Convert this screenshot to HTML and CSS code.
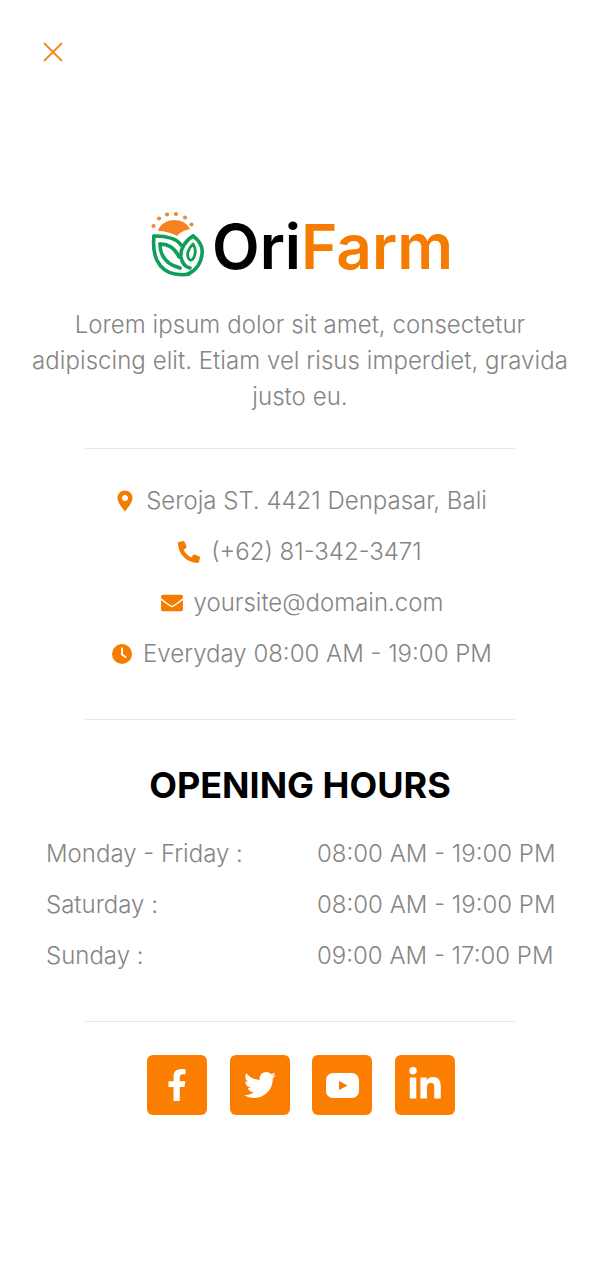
FILE: index.html
```html
<!DOCTYPE html>
<html>

<head>
    <title>OriFarm</title>
    <link rel="stylesheet" href="styles.css">
</head>

<body>
    <div class="menu">
        <button class="close-button" aria-label="Close">
            <svg viewBox="0 0 20 20" width="20" height="20"><path d="M1 1L19 19M19 1L1 19" stroke="#f08a1c" stroke-width="1.8" fill="none"/></svg>
        </button>

        <div class="about">
            <div class="logo">
                <svg class="logo-mark" viewBox="0 0 54 66" width="54" height="66">
                    <!-- sun and rays -->
                    <path d="M7 20C9 13 16 9 23 9C30 9 36 12 39 18C34 19 29 21 26 25C21 22 14 20 7 20Z" fill="#f58220"/>
                    <g fill="#ef8a3c">
                        <circle cx="2.5" cy="15" r="2.1"/>
                        <circle cx="8" cy="7.5" r="2.1"/>
                        <circle cx="16" cy="3.5" r="2.1"/>
                        <circle cx="25" cy="3" r="2.1"/>
                        <circle cx="34" cy="6.5" r="2.1"/>
                        <circle cx="40.5" cy="13.5" r="2.1"/>
                    </g>
                    <!-- leaves -->
                    <g fill="none" stroke="#0f9d58" stroke-width="3.6" stroke-linecap="round" stroke-linejoin="round">
                        <path d="M3 25C1 42 6 60 24 63C30 64 34 64 38 63"/>
                        <path d="M3 25C15 25 26 28 30 34"/>
                        <path d="M42 25C34 30 29 38 30 46C31 52 34 56 39 57"/>
                        <path d="M42 25C49 30 52 36 51 43C50 53 44 60 37 63"/>
                        <path d="M9 33C9 44 14 53 29 57"/>
                        <path d="M9 33C17 33 24 37 28 46"/>
                        <path d="M42 33C37 38 35 44 38 48C40 51 43 48 44 43C45 39 44 36 42 33Z" stroke-width="2.8"/>
                    </g>
                </svg>
                <span class="logo-text">Ori<span class="logo-accent">Farm</span></span>
            </div>
            <p class="intro">Lorem ipsum dolor sit amet, consectetur adipiscing elit. Etiam vel risus imperdiet, gravida justo eu.</p>
        </div>

        <hr class="divider">

        <ul class="contact-list">
            <li class="contact-item">
                <svg class="contact-icon marker-icon" viewBox="0 0 16 22" width="16" height="22"><path fill-rule="evenodd" d="M8 0.5C3.8 0.5 0.5 3.8 0.5 8C0.5 12 5 18 8 21.5C11 18 15.5 12 15.5 8C15.5 3.8 12.2 0.5 8 0.5ZM8 11C6.3 11 5 9.7 5 8C5 6.3 6.3 5 8 5C9.7 5 11 6.3 11 8C11 9.7 9.7 11 8 11Z" fill="#f57c00"/></svg>
                Seroja ST. 4421 Denpasar, Bali
            </li>
            <li class="contact-item">
                <svg class="contact-icon phone-icon" viewBox="0 0 512 512" width="22" height="22"><path d="M497.39 361.8l-112-48a24 24 0 0 0-28 6.9l-49.6 60.6A370.66 370.66 0 0 1 130.6 204.11l60.6-49.6a23.94 23.94 0 0 0 6.9-28l-48-112A24.16 24.16 0 0 0 122.6.61l-104 24A24 24 0 0 0 0 48c0 256.5 207.9 464 464 464a24 24 0 0 0 23.4-18.6l24-104a24.29 24.29 0 0 0-14.01-27.6z" fill="#f57c00"/></svg>
                (+62) 81-342-3471
            </li>
            <li class="contact-item">
                <svg class="contact-icon" viewBox="0 0 512 512" width="22" height="22"><path d="M502.3 190.8c3.9-3.1 9.7-.2 9.7 4.7V400c0 26.5-21.5 48-48 48H48c-26.5 0-48-21.5-48-48V195.6c0-5 5.7-7.8 9.7-4.7 22.4 17.4 52.1 39.5 154.1 113.6 21.1 15.4 56.7 47.8 92.2 47.6 35.7.3 72-32.8 92.3-47.6 102-74.1 131.6-96.3 154-113.7zM256 320c23.2.4 56.6-29.2 73.4-41.4 132.7-96.3 142.8-104.7 173.4-128.7 5.8-4.5 9.2-11.5 9.2-18.9v-19c0-26.5-21.5-48-48-48H48C21.5 64 0 85.5 0 112v19c0 7.4 3.4 14.3 9.2 18.9 30.6 23.9 40.7 32.4 173.4 128.7 16.8 12.2 50.2 41.8 73.4 41.4z" fill="#f57c00"/></svg>
                yoursite@domain.com
            </li>
            <li class="contact-item">
                <svg class="contact-icon" viewBox="0 0 20 20" width="20" height="20"><circle cx="10" cy="10" r="10" fill="#f57c00"/><path d="M10 4.5V10.5L13.5 13" stroke="#fff" stroke-width="2" fill="none" stroke-linecap="round" stroke-linejoin="round"/></svg>
                Everyday 08:00 AM - 19:00 PM
            </li>
        </ul>

        <hr class="divider">

        <h2 class="hours-title">OPENING HOURS</h2>
        <div class="hours-table">
            <span>Monday - Friday :</span><span>08:00 AM - 19:00 PM</span>
            <span>Saturday :</span><span>08:00 AM - 19:00 PM</span>
            <span>Sunday :</span><span>09:00 AM - 17:00 PM</span>
        </div>

        <hr class="divider">

        <div class="social-list">
            <a class="social-button" href="#" aria-label="Facebook">
                <svg viewBox="0 0 320 512" width="22" height="32"><path d="M279.14 288l14.22-92.66h-88.91v-60.13c0-25.35 12.42-50.06 52.24-50.06h40.42V6.26S260.43 0 225.36 0c-73.22 0-121.08 44.38-121.08 124.72v70.62H22.89V288h81.39v224h100.17V288z" fill="#fff"/></svg>
            </a>
            <a class="social-button" href="#" aria-label="Twitter">
                <svg viewBox="0 0 512 512" width="32" height="32"><path d="M459.37 151.716c.325 4.548.325 9.097.325 13.645 0 138.72-105.583 298.558-298.558 298.558-59.452 0-114.68-17.219-161.137-47.106 8.447.974 16.568 1.299 25.34 1.299 49.055 0 94.213-16.568 130.274-44.832-46.132-.975-84.792-31.188-98.112-72.772 6.498.974 12.995 1.624 19.818 1.624 9.421 0 18.843-1.3 27.614-3.573-48.081-9.747-84.143-51.98-84.143-102.985v-1.299c13.969 7.797 30.214 12.67 47.431 13.319-28.264-18.843-46.781-51.005-46.781-87.391 0-19.492 5.197-37.36 14.294-52.954 51.655 63.675 129.3 105.258 216.365 109.807-1.624-7.797-2.599-15.918-2.599-24.04 0-57.828 46.782-104.934 104.934-104.934 30.213 0 57.502 12.67 76.67 33.137 23.715-4.548 46.456-13.32 66.599-25.34-7.798 24.366-24.366 44.833-46.132 57.827 21.117-2.273 41.584-8.122 60.426-16.243-14.292 20.791-32.161 39.308-52.628 54.253z" fill="#fff"/></svg>
            </a>
            <a class="social-button" href="#" aria-label="YouTube">
                <svg viewBox="0 0 33 25" width="33" height="25"><rect width="33" height="25" rx="7" fill="#fff"/><path d="M13 8L21.5 12.5L13 17Z" fill="#f57c00"/></svg>
            </a>
            <a class="social-button" href="#" aria-label="LinkedIn">
                <svg viewBox="0 0 448 512" width="32" height="36"><path d="M100.28 448H7.4V148.9h92.88zM53.79 108.1C24.09 108.1 0 83.5 0 53.8a53.79 53.79 0 0 1 107.58 0c0 29.7-24.1 54.3-53.79 54.3zM447.9 448h-92.68V302.4c0-34.7-.7-79.2-48.29-79.2-48.29 0-55.69 37.7-55.69 76.7V448h-92.78V148.9h89.08v40.8h1.3c12.4-23.5 42.69-48.3 87.88-48.3 94 0 111.28 61.9 111.28 142.3V448z" fill="#fff"/></svg>
            </a>
        </div>
    </div>
</body>

</html>
```

FILE: styles.css
```css
body {
    font-family: Inter, "Liberation Sans", sans-serif;
    font-weight: 300;
    font-size: 24px;
    line-height: 36px;
    color: #858585;
    background-color: #ffffff;
    margin: 0;
    padding: 0;
}

.menu {
    min-height: 1272px;
    padding: 42px 30px 0;
    box-sizing: border-box;
}

.close-button {
    display: block;
    width: 20px;
    height: 20px;
    margin-left: 13px;
    padding: 0;
    border: 0;
    background: none;
}

.close-button svg {
    display: block;
}

.about {
    margin-top: 149px;
    text-align: center;
}

.logo {
    display: flex;
    justify-content: center;
    align-items: flex-start;
    gap: 7px;
    height: 66px;
    margin-left: 4px;
}

.logo-text {
    font-weight: 600;
    font-size: 62px;
    line-height: 72px;
    color: #000000;
}

.logo-accent {
    color: #f57c00;
}

.intro {
    margin: 30px 0 0;
    letter-spacing: 0.05px;
}

.divider {
    width: 430px;
    height: 1px;
    margin: 33px auto 0;
    border: 0;
    background-color: #e6e6e6;
}

.contact-list {
    list-style: none;
    margin: 34px 0 0;
    padding: 0 0 0 4px;
    display: flex;
    flex-direction: column;
    gap: 15px;
}

.contact-item {
    display: flex;
    justify-content: center;
    align-items: center;
    gap: 11px;
}

.marker-icon {
    margin-right: 2px;
}

.phone-icon {
    margin-left: -4px;
}

.contact-list + .divider {
    margin-top: 47px;
}

.hours-title {
    margin: 44px 0 0;
    font-size: 36px;
    line-height: 42px;
    font-weight: 700;
    color: #000000;
    text-align: center;
}

.hours-table {
    display: grid;
    grid-template-columns: 271px auto;
    row-gap: 15px;
    margin: 30px 0 0 16px;
}

.hours-table + .divider {
    margin-top: 47px;
}

.social-list {
    display: flex;
    justify-content: center;
    gap: 22.5px;
    margin: 33px 0 0 2px;
}

.social-button {
    display: flex;
    justify-content: center;
    align-items: center;
    width: 60px;
    height: 60px;
    border-radius: 6px;
    background-color: #fb7e00;
}
```
